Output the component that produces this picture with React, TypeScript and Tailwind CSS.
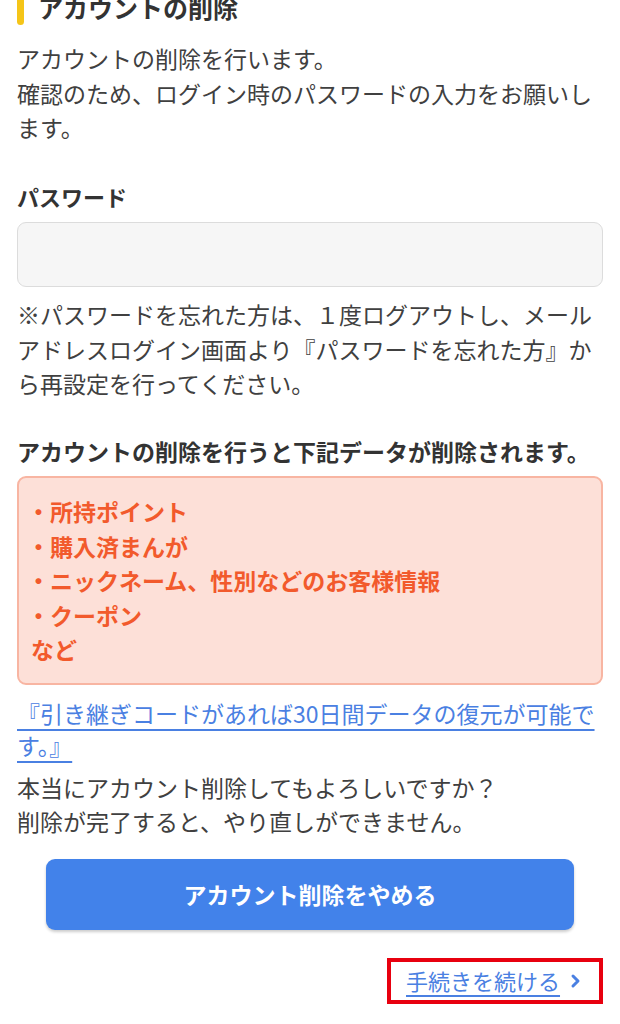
const deletedItems = ["所持ポイント", "購入済まんが", "ニックネーム、性別などのお客様情報", "クーポン"];

export default function App() {
  return (
    <div
      className="min-h-[1024px] overflow-hidden bg-white px-[17px] text-[23px] leading-[34.5px] text-[#404040]"
      style={{ fontFamily: '"Noto Sans CJK JP", "Noto Sans", sans-serif' }}
    >
      <div className="-mt-[11px] flex items-stretch gap-[14px]">
        <span className="w-[7px] rounded-full bg-[#f5c518]" />
        <h1 className="text-[25px] font-bold leading-[36px] text-[#333]">アカウントの削除</h1>
      </div>

      <p className="mt-[16px]">
        アカウントの削除を行います。
        <br />
        確認のため、ログイン時のパスワードの入力をお願いします。
      </p>

      <label className="mt-[34px] block text-[22px] font-bold text-[#333]">パスワード</label>
      <input
        type="password"
        className="mt-[9px] block h-[65px] w-full rounded-[9px] border border-[#dcdcdc] bg-[#f6f6f6] px-3 outline-none"
      />

      <p className="mt-[10px]">
        ※パスワードを忘れた方は、１度ログアウトし、メールアドレスログイン画面より『パスワードを忘れた方』から再設定を行ってください。
      </p>

      <h2 className="mt-[33px] font-bold text-[#333]">アカウントの削除を行うと下記データが削除されます。</h2>

      <div className="mt-[8px] rounded-[9px] border-2 border-[#f8b5a2] bg-[#fde0d8] py-[16px] pl-[8px] font-bold text-[#f25a2c]">
        {deletedItems.map((item) => (
          <p key={item}>・{item}</p>
        ))}
        <p className="ml-[4px]">など</p>
      </div>

      <a href="#" className="mt-[12px] block leading-[32px] text-[#4a80e2] underline underline-offset-[6px]">
        『引き継ぎコードがあれば30日間データの復元が可能です。』
      </a>

      <p className="mt-[9px]">
        本当にアカウント削除してもよろしいですか？
        <br />
        削除が完了すると、やり直しができません。
      </p>

      <button
        type="button"
        className="mx-[29px] mt-[20px] flex h-[71px] w-[528px] items-center justify-center rounded-[9px] bg-[#4282ea] font-bold text-white shadow-[0_2px_3px_rgba(0,0,0,0.2)]"
      >
        アカウント削除をやめる
      </button>

      <div className="mt-[28px] flex justify-end">
        <div className="flex h-[46px] w-[216px] items-center gap-[10px] border-[4px] border-[#e8000f] pl-[15px]">
          <a href="#" className="text-[22px] text-[#4a80e2] underline underline-offset-[5px]">
            手続きを続ける
          </a>
          <svg width="12" height="16" viewBox="0 0 12 16" className="mt-[1px]">
            <path d="M3 3l5 5-5 5" fill="none" stroke="#4a80e2" strokeWidth="3" strokeLinecap="round" strokeLinejoin="round" />
          </svg>
        </div>
      </div>
    </div>
  );
}
